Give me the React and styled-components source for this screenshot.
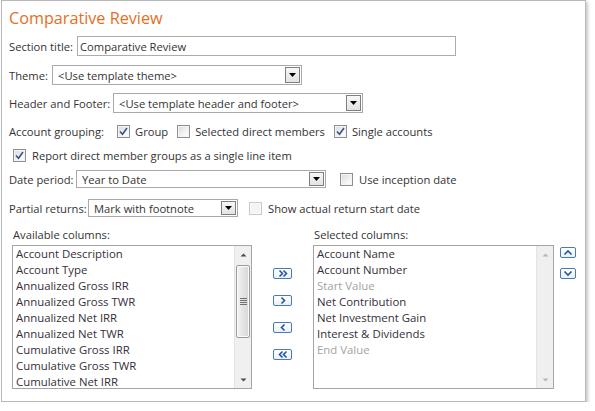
import React from "react";
import styled, { createGlobalStyle } from "styled-components";

const GlobalStyle = createGlobalStyle`
  html, body { margin: 0; padding: 0; background: #fff; }
  body {
    font-family: "Open Sans", "Noto Sans", "Liberation Sans", sans-serif;
    font-size: 11.2px;
    color: #333;
  }
  * { box-sizing: border-box; }
`;

const Page = styled.div`
  padding-left: 1px;
`;

const Panel = styled.div`
  width: 585px;
  height: 402px;
  border: 1px solid #b9b9b9;
  box-shadow: 2px 2px 3px rgba(0, 0, 0, 0.22);
  padding: 6px 7px 0 7px;
  background: #fff;
`;

const Title = styled.h1`
  margin: 0;
  font-weight: normal;
  font-size: 16.2px;
  line-height: 22px;
  color: #e3701e;
`;

const Row = styled.div`
  display: flex;
  align-items: center;
  height: ${(p) => p.$h || 20}px;
  margin-top: ${(p) => p.$mt || 0}px;
  padding-left: ${(p) => p.$pl || 0}px;
  white-space: nowrap;
`;

const Label = styled.span`
  width: ${(p) => p.$w}px;
  flex: none;
`;

const TextInput = styled.div`
  width: ${(p) => p.$w}px;
  height: 100%;
  border: 1px solid #acacac;
  padding-left: 2px;
  display: flex;
  align-items: center;
  color: #333;
`;

const SelectBox = styled.div`
  width: ${(p) => p.$w}px;
  height: 100%;
  border: 1px solid #a9a9a9;
  display: flex;
  align-items: center;
  background: #fff;
  flex: none;
`;

const SelectValue = styled.span`
  flex: 1;
  padding-left: 5px;
  overflow: hidden;
`;

const ArrowBtn = styled.span`
  width: 15px;
  height: calc(100% - 2px);
  margin-right: 1px;
  border: 1px solid #7f7f7f;
  background: linear-gradient(#f7f7f7, #e3e3e3);
  display: flex;
  align-items: center;
  justify-content: center;
`;

const CheckItem = styled.span`
  display: flex;
  align-items: center;
  gap: ${(p) => p.$gap || 5}px;
  margin-left: ${(p) => p.$ml || 0}px;
  flex: none;
`;

const Box = styled.span`
  width: 13px;
  height: 13px;
  flex: none;
  border: 1px solid ${(p) => (p.$disabled ? "#c9c9c9" : "#8e8f8f")};
  background: ${(p) =>
    p.$disabled
      ? "#f4f4f4"
      : "linear-gradient(135deg, #d9d9d9 0%, #f3f3f3 60%, #ffffff 100%)"};
  box-shadow: inset 0 0 0 1px ${(p) => (p.$disabled ? "#fafafa" : "#f4f4f4")};
  display: flex;
  align-items: center;
  justify-content: center;
`;

const ListsArea = styled.div`
  display: flex;
  align-items: flex-start;
  margin-top: 11px;
  padding-left: 3px;
`;

const ListGroup = styled.div`
  display: flex;
  flex-direction: column;
  width: ${(p) => p.$w}px;
  margin-left: ${(p) => p.$ml || 0}px;
  flex: none;
`;

const ListLabel = styled.div`
  height: 14px;
  line-height: 14px;
  padding-left: 1px;
  margin-bottom: 3px;
`;

const ListBox = styled.div`
  height: 144px;
  border: 1px solid #a5a5a5;
  display: flex;
  background: #fff;
`;

const Items = styled.div`
  flex: 1;
  padding: 0 3px;
  overflow: hidden;
`;

const Item = styled.div`
  height: 16px;
  line-height: 16px;
  white-space: nowrap;
  font-size: 11.4px;
  color: ${(p) => (p.$muted ? "#a3a3a3" : "#35303a")};
`;

const Scrollbar = styled.div`
  width: 17px;
  flex: none;
  display: flex;
  flex-direction: column;
  align-items: stretch;
  background: ${(p) => (p.$disabled ? "#efefef" : "#f0f0f0")};
  border-left: 1px solid #e4e4e4;
`;

const ScrollArrow = styled.div`
  height: 17px;
  flex: none;
  display: flex;
  align-items: center;
  justify-content: center;
`;

const Track = styled.div`
  flex: 1;
  padding: 2px 1px 0 1px;
`;

const Thumb = styled.div`
  height: 73px;
  border: 1px solid #9b9b9b;
  border-radius: 2px;
  background: linear-gradient(to right, #f4f4f4, #e4e4e4 50%, #d6d6d6);
  box-shadow: inset 0 0 0 1px #fbfbfb;
  display: flex;
  flex-direction: column;
  align-items: center;
  justify-content: center;
  gap: 1px;
`;

const Grip = styled.span`
  width: 7px;
  height: 1px;
  background: #6f6f6f;
`;

const ButtonCol = styled.div`
  display: flex;
  flex-direction: column;
  gap: ${(p) => p.$gap}px;
  margin-left: ${(p) => p.$ml}px;
  margin-top: ${(p) => p.$mt}px;
  flex: none;
`;

const SmallBtn = styled.span`
  width: ${(p) => p.$w}px;
  height: 11px;
  border: 1px solid #4a7ab4;
  border-radius: 2px;
  background: linear-gradient(#ffffff, #eaf0f8);
  display: flex;
  align-items: center;
  justify-content: center;
`;

const Tri = ({ down = true, color = "#000" }) => (
  <svg width="7" height="4" viewBox="0 0 7 4">
    <polygon
      points={down ? "0,0 7,0 3.5,4" : "0,4 7,4 3.5,0"}
      fill={color}
    />
  </svg>
);

const SmallTri = ({ down = true, color = "#4a4a4a" }) => (
  <svg width="7" height="4" viewBox="0 0 7 4">
    <polygon
      points={down ? "0.5,0.5 6.5,0.5 3.5,3.5" : "0.5,3.5 6.5,3.5 3.5,0.5"}
      fill={color}
    />
  </svg>
);

const Check = () => (
  <svg width="9" height="9" viewBox="0 0 9 9">
    <path
      d="M1 4.5 L3.5 7.2 L8 1"
      fill="none"
      stroke="#3b4f8c"
      strokeWidth="1.6"
    />
  </svg>
);

const Checkbox = ({ checked, disabled }) => (
  <Box $disabled={disabled}>{checked && <Check />}</Box>
);

const Chevron = ({ kind }) => {
  const c = "#24589a";
  const paths = {
    rr: "M4.5 1.5 L7.5 4.5 L4.5 7.5 M8.5 1.5 L11.5 4.5 L8.5 7.5",
    r: "M6.5 1.5 L9.5 4.5 L6.5 7.5",
    l: "M9.5 1.5 L6.5 4.5 L9.5 7.5",
    ll: "M7.5 1.5 L4.5 4.5 L7.5 7.5 M11.5 1.5 L8.5 4.5 L11.5 7.5",
  };
  return (
    <svg width="16" height="9" viewBox="0 0 16 9">
      <path d={paths[kind]} fill="none" stroke={c} strokeWidth="1.6" />
    </svg>
  );
};

const UpDown = ({ up }) => (
  <svg width="14" height="9" viewBox="0 0 14 9">
    <path
      d={up ? "M3.5 6.5 L7 3 L10.5 6.5" : "M3.5 2.5 L7 6 L10.5 2.5"}
      fill="none"
      stroke="#24589a"
      strokeWidth="1.6"
    />
  </svg>
);

const Select = ({ w, value }) => (
  <SelectBox $w={w}>
    <SelectValue>{value}</SelectValue>
    <ArrowBtn>
      <Tri />
    </ArrowBtn>
  </SelectBox>
);

const available = [
  "Account Description",
  "Account Type",
  "Annualized Gross IRR",
  "Annualized Gross TWR",
  "Annualized Net IRR",
  "Annualized Net TWR",
  "Cumulative Gross IRR",
  "Cumulative Gross TWR",
  "Cumulative Net IRR",
];

const selected = [
  { t: "Account Name" },
  { t: "Account Number" },
  { t: "Start Value", muted: true },
  { t: "Net Contribution" },
  { t: "Net Investment Gain" },
  { t: "Interest & Dividends" },
  { t: "End Value", muted: true },
];

export default function App() {
  return (
    <Page>
      <GlobalStyle />
      <Panel>
        <Title>Comparative Review</Title>

        <Row $mt={7} $h={20}>
          <Label $w={68}>Section title:</Label>
          <TextInput $w={379}>Comparative Review</TextInput>
        </Row>

        <Row $mt={9} $h={20}>
          <Label $w={43}>Theme:</Label>
          <Select w={250} value="<Use template theme>" />
        </Row>

        <Row $mt={8} $h={20}>
          <Label $w={104}>Header and Footer:</Label>
          <Select w={250} value="<Use template header and footer>" />
        </Row>

        <Row $mt={9} $h={18}>
          <Label $w={108}>Account grouping:</Label>
          <CheckItem>
            <Checkbox checked />
            <span>Group</span>
          </CheckItem>
          <CheckItem $ml={9}>
            <Checkbox />
            <span>Selected direct members</span>
          </CheckItem>
          <CheckItem $ml={9}>
            <Checkbox checked />
            <span>Single accounts</span>
          </CheckItem>
        </Row>

        <Row $mt={6} $h={18} $pl={4}>
          <CheckItem $gap={6}>
            <Checkbox checked />
            <span>Report direct member groups as a single line item</span>
          </CheckItem>
        </Row>

        <Row $mt={6} $h={18}>
          <Label $w={67}>Date period:</Label>
          <Select w={250} value="Year to Date" />
          <CheckItem $ml={14} $gap={6}>
            <Checkbox />
            <span>Use inception date</span>
          </CheckItem>
        </Row>

        <Row $mt={11} $h={18}>
          <Label $w={79}>Partial returns:</Label>
          <Select w={150} value="Mark with footnote" />
          <CheckItem $ml={11} $gap={6}>
            <Checkbox disabled />
            <span>Show actual return start date</span>
          </CheckItem>
        </Row>

        <ListsArea>
          <ListGroup $w={240}>
            <ListLabel>Available columns:</ListLabel>
            <ListBox>
              <Items>
                {available.map((t) => (
                  <Item key={t}>{t}</Item>
                ))}
              </Items>
              <Scrollbar>
                <ScrollArrow>
                  <SmallTri down={false} />
                </ScrollArrow>
                <Track>
                  <Thumb>
                    <Grip />
                    <Grip />
                    <Grip />
                    <Grip />
                  </Thumb>
                </Track>
                <ScrollArrow>
                  <SmallTri />
                </ScrollArrow>
              </Scrollbar>
            </ListBox>
          </ListGroup>

          <ButtonCol $ml={21} $mt={40} $gap={16}>
            <SmallBtn $w={19}>
              <Chevron kind="rr" />
            </SmallBtn>
            <SmallBtn $w={19}>
              <Chevron kind="r" />
            </SmallBtn>
            <SmallBtn $w={19}>
              <Chevron kind="l" />
            </SmallBtn>
            <SmallBtn $w={19}>
              <Chevron kind="ll" />
            </SmallBtn>
          </ButtonCol>

          <ListGroup $w={241} $ml={21}>
            <ListLabel>Selected columns:</ListLabel>
            <ListBox>
              <Items>
                {selected.map((s) => (
                  <Item key={s.t} $muted={s.muted}>
                    {s.t}
                  </Item>
                ))}
              </Items>
              <Scrollbar $disabled>
                <ScrollArrow>
                  <SmallTri down={false} color="#b5b5b5" />
                </ScrollArrow>
                <Track />
                <ScrollArrow>
                  <SmallTri color="#b5b5b5" />
                </ScrollArrow>
              </Scrollbar>
            </ListBox>
          </ListGroup>

          <ButtonCol $ml={6} $mt={19} $gap={10}>
            <SmallBtn $w={16}>
              <UpDown up />
            </SmallBtn>
            <SmallBtn $w={16}>
              <UpDown />
            </SmallBtn>
          </ButtonCol>
        </ListsArea>
      </Panel>
    </Page>
  );
}
